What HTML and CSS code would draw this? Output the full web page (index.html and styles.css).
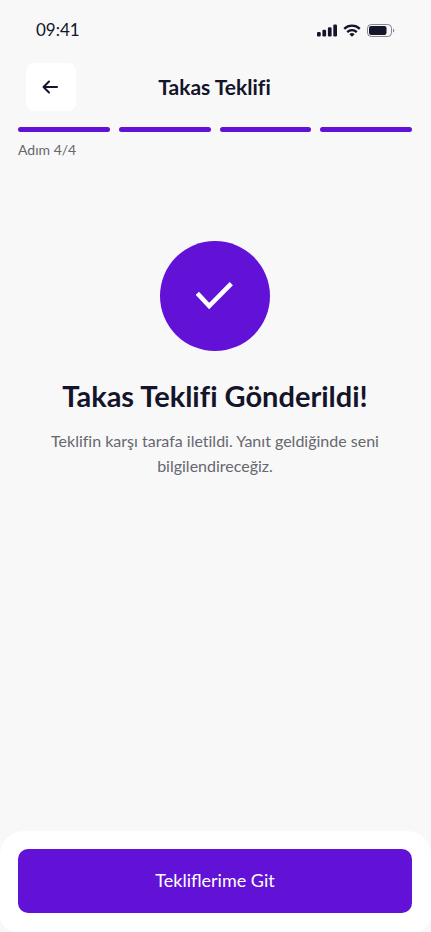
FILE: index.html
```html
<!DOCTYPE html>
<html lang="tr">
<head>
<meta charset="utf-8">
<meta name="viewport" content="width=device-width, initial-scale=1">
<title>Takas Teklifi</title>
<link rel="stylesheet" href="styles.css">
</head>
<body>
<div class="screen">
  <div class="status">
    <span class="time">09:41</span>
    <div class="indicators">
      <svg width="20" height="13" viewBox="0 0 20 13" aria-hidden="true"><rect x="0" y="8" width="3.7" height="4.5" rx="1.2"/><rect x="5.4" y="5.8" width="3.7" height="6.7" rx="1.2"/><rect x="10.9" y="3.3" width="3.7" height="9.2" rx="1.2"/><rect x="16.3" y="0.5" width="3.7" height="12" rx="1.2"/></svg>
      <svg width="18" height="13" viewBox="0 0 18 13" aria-hidden="true"><g fill="none" stroke="#14142b" stroke-width="2.3"><path d="M1.2 4.8a11.2 11.2 0 0 1 15.6 0"/><path d="M4.2 8.1a7 7 0 0 1 9.6 0"/></g><path d="M9 12.8 6.4 10.2a3.8 3.8 0 0 1 5.2 0z"/></svg>
      <svg width="28" height="13" viewBox="0 0 28 13" aria-hidden="true"><rect x=".5" y=".5" width="24" height="12" rx="3.8" fill="none" stroke="#14142b" stroke-opacity=".5"/><rect x="2" y="2" width="17.5" height="9" rx="2.2"/><path d="M26 4.5v4a2.2 2.2 0 0 0 0-4z" opacity=".5"/></svg>
    </div>
  </div>
  <header class="header">
    <button class="back" type="button" aria-label="Geri">
      <svg width="16" height="14" viewBox="0 0 16 14" fill="none" stroke="#14142b" stroke-width="2" stroke-linecap="round" stroke-linejoin="round" aria-hidden="true"><path d="M15 7H1.5M7 1.5 1.5 7 7 12.5"/></svg>
    </button>
    <h1 class="title">Takas Teklifi</h1>
  </header>
  <div class="steps" aria-hidden="true"><span class="step"></span><span class="step"></span><span class="step"></span><span class="step"></span></div>
  <p class="caption">Adım 4/4</p>
  <main class="result">
    <div class="badge">
      <svg width="38" height="30" viewBox="0 0 38 30" fill="none" stroke="#fff" stroke-width="4.6" aria-hidden="true"><path d="M1.3 12.2 13.2 25 35.3 2.7"/></svg>
    </div>
    <h2 class="heading">Takas Teklifi Gönderildi!</h2>
    <p class="message">Teklifin karşı tarafa iletildi. Yanıt geldiğinde seni bilgilendireceğiz.</p>
  </main>
  <footer class="footer">
    <button class="primary" type="button">Tekliflerime Git</button>
  </footer>
</div>
</body>
</html>
```
FILE: styles.css
```css
* {
  box-sizing: border-box;
}

body,
h1,
h2,
p {
  margin: 0;
}

body {
  background: #f8f8f8;
  color: #14142b;
  font-family: Lato, "Liberation Sans", sans-serif;
  font-variant-ligatures: no-common-ligatures;
}

button {
  border: 0;
  font-family: inherit;
  cursor: pointer;
}

svg {
  display: block;
  fill: #14142b;
}

.screen {
  display: flex;
  flex-direction: column;
  min-height: 100vh;
}

.status {
  display: flex;
  align-items: center;
  justify-content: space-between;
  padding: 18px 36px 0;
}

.time {
  font-size: 17px;
  line-height: 24px;
}

.indicators {
  display: flex;
  gap: 6px;
}

.header {
  display: grid;
  grid-template-columns: 50px 1fr 50px;
  align-items: center;
  padding: 21px 28px 0 26px;
}

.back {
  display: flex;
  align-items: center;
  justify-content: center;
  height: 48px;
  padding: 0 2px 0 0;
  border-radius: 8px;
  background: #fff;
}

.back svg,
.badge svg {
  fill: none;
}

.title {
  font-size: 21px;
  line-height: 28px;
  font-weight: 700;
  text-align: center;
}

.steps {
  display: flex;
  gap: 9px;
  padding: 16px 19px 0 18px;
}

.step {
  flex: 1;
  height: 5px;
  border-radius: 3px;
  background: #6211d6;
}

.caption {
  padding: 8px 18px 0;
  color: #66676f;
  font-size: 14px;
  line-height: 20px;
}

.result {
  display: flex;
  flex: 1;
  flex-direction: column;
  align-items: center;
  padding: 81px 37px 24px 36px;
  text-align: center;
}

.badge {
  display: flex;
  align-items: center;
  justify-content: center;
  width: 110px;
  height: 110px;
  border-radius: 50%;
  background: #6211d6;
}

.heading {
  margin-top: 27px;
  font-size: 29px;
  line-height: 36px;
  font-weight: 700;
}

.message {
  margin-top: 14px;
  color: #66676f;
  font-size: 16px;
  line-height: 25px;
}

.footer {
  padding: 18px 19px 19px 18px;
  border-radius: 24px 24px 16px 16px;
  background: #fff;
}

.primary {
  display: block;
  width: 100%;
  height: 64px;
  padding: 0 0 2px;
  border-radius: 10px;
  background: #6211d6;
  color: #fff;
  font-size: 18px;
  line-height: 24px;
}
```
